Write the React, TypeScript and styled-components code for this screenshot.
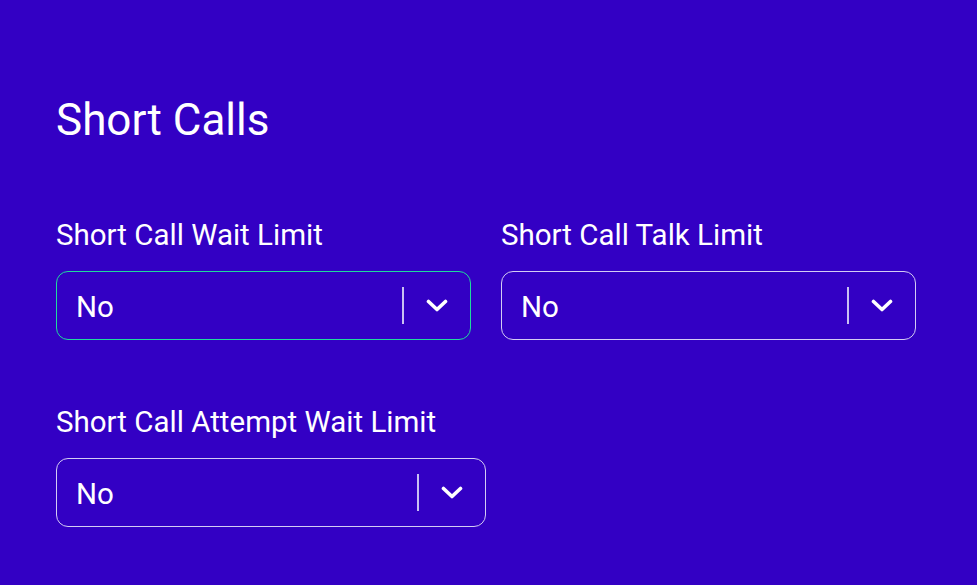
import React from "react";
import styled, { createGlobalStyle } from "styled-components";

const Global = createGlobalStyle`
  html, body { margin: 0; padding: 0; background: #3300c4; }
  body { font-family: Roboto, "Noto Sans", sans-serif; color: #ffffff; }
`;

const Page = styled.div`
  width: 977px;
  height: 585px;
  box-sizing: border-box;
  padding: 94px 56px 0 56px;
  background: #3300c4;
`;

const Title = styled.h1`
  margin: 0;
  font-size: 44px;
  font-weight: 400;
  line-height: 52px;
  color: #ffffff;
`;

const Grid = styled.div`
  margin-top: 72px;
  display: grid;
  grid-template-columns: 415px 415px;
  column-gap: 30px;
  row-gap: 65px;
  align-items: start;
`;

const Field = styled.div<{ $width: number }>`
  display: flex;
  flex-direction: column;
  gap: 18px;
  width: ${(p) => p.$width}px;
`;

const Label = styled.label`
  font-size: 29.5px;
  line-height: 35px;
  font-weight: 400;
  color: #ffffff;
  white-space: nowrap;
`;

const Control = styled.div<{ $focused?: boolean }>`
  box-sizing: border-box;
  height: 69px;
  border: 1.8px solid ${(p) => (p.$focused ? "#1fdb9d" : "#d4ccf4")};
  border-radius: 12px;
  display: flex;
  align-items: center;
`;

const Value = styled.div`
  flex: 1;
  padding: 4px 0 0 19px;
  font-size: 29.5px;
  line-height: 35px;
  color: #ffffff;
`;

const Separator = styled.span`
  width: 1.6px;
  height: 37px;
  background: #c9c0f2;
`;

const Indicator = styled.div`
  width: 66px;
  display: flex;
  align-items: center;
  justify-content: center;
`;

const Chevron = () => (
  <svg width="22" height="14" viewBox="0 0 22 14" fill="none">
    <path
      d="M2.5 2.5 L11 10.5 L19.5 2.5"
      stroke="#ffffff"
      strokeWidth="3.6"
      strokeLinecap="round"
      strokeLinejoin="round"
    />
  </svg>
);

const SelectField = ({
  label,
  width,
  focused,
}: {
  label: string;
  width: number;
  focused?: boolean;
}) => (
  <Field $width={width}>
    <Label>{label}</Label>
    <Control $focused={focused}>
      <Value>No</Value>
      <Separator />
      <Indicator>
        <Chevron />
      </Indicator>
    </Control>
  </Field>
);

export default function App() {
  return (
    <>
      <Global />
      <Page>
        <Title>Short Calls</Title>
        <Grid>
          <SelectField label="Short Call Wait Limit" width={415} focused />
          <SelectField label="Short Call Talk Limit" width={415} />
          <SelectField label="Short Call Attempt Wait Limit" width={430} />
        </Grid>
      </Page>
    </>
  );
}
